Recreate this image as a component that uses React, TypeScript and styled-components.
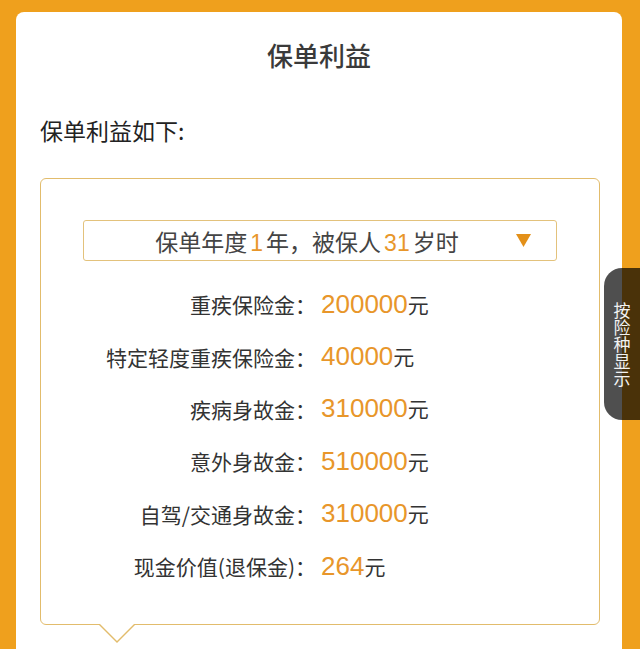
import React from "react";
import styled, { createGlobalStyle } from "styled-components";

const GlobalStyle = createGlobalStyle`
  html, body {
    margin: 0;
    padding: 0;
    background: #EFA01D;
    overflow: hidden;
  }
  body {
    font-family: "Noto Sans CJK SC", "Noto Sans", "Liberation Sans", sans-serif;
    color: #333;
  }
`;

const Page = styled.div`
  position: relative;
  width: 640px;
  height: 649px;
  overflow: hidden;
  padding-top: 12px;
  box-sizing: border-box;
`;

const Card = styled.div`
  margin: 0 18px 0 16px;
  background: #fff;
  border-radius: 8px 8px 0 0;
  padding: 28px 0 60px;
`;

const Title = styled.h1`
  margin: 0;
  font-size: 26px;
  line-height: 30px;
  font-weight: 500;
  text-align: center;
  color: #3a3a3a;
`;

const Subtitle = styled.div`
  margin: 45px 0 0 24px;
  font-size: 23px;
  line-height: 30px;
  color: #222;
`;

const Box = styled.div`
  position: relative;
  margin: 33px 0 0 24px;
  width: 560px;
  box-sizing: border-box;
  border: 1px solid #E2BC6C;
  border-radius: 6px;
  padding: 41px 0 32px;

  &::before,
  &::after {
    content: "";
    position: absolute;
    left: 57px;
    width: 0;
    height: 0;
    border-left: 19px solid transparent;
    border-right: 19px solid transparent;
  }
  &::before {
    bottom: -19px;
    border-top: 19px solid #E2BC6C;
  }
  &::after {
    bottom: -17px;
    left: 58px;
    border-left-width: 18px;
    border-right-width: 18px;
    border-top: 18px solid #fff;
  }
`;

const Select = styled.div`
  margin-left: 42px;
  width: 474px;
  height: 41px;
  box-sizing: border-box;
  border: 1px solid #E3C27C;
  border-radius: 3px;
  display: flex;
  align-items: center;
  padding: 0 25px 0 14px;
`;

const SelectText = styled.div`
  flex: 1;
  text-align: center;
  font-size: 23px;
  color: #444;
  white-space: nowrap;
`;

const Num = styled.span`
  color: #E8962A;
  padding: 0 3px;
  font-family: "Liberation Sans", "Noto Sans", sans-serif;
`;

const Caret = styled.svg`
  width: 15px;
  height: 13px;
  display: block;
`;

const Rows = styled.div`
  margin-top: 17px;
  display: grid;
  grid-template-columns: 275px 1fr;
  grid-auto-rows: 52.4px;
  column-gap: 5px;
  align-items: center;
`;

const Label = styled.div`
  text-align: right;
  font-size: 21px;
  color: #333;
  white-space: nowrap;
`;

const Value = styled.div`
  display: flex;
  align-items: baseline;
  white-space: nowrap;
`;

const Amount = styled.span`
  font-family: "Liberation Sans", "Noto Sans", sans-serif;
  font-size: 26px;
  color: #E8962A;
`;

const Unit = styled.span`
  font-size: 21px;
  color: #333;
`;

const SideTab = styled.div`
  position: absolute;
  right: 0;
  top: 268px;
  width: 36px;
  height: 152px;
  border-radius: 18px 0 0 18px;
  background: rgba(0, 0, 0, 0.69);
  display: flex;
  align-items: center;
  justify-content: center;
`;

const SideText = styled.div`
  writing-mode: vertical-rl;
  font-size: 17px;
  line-height: 17px;
  color: #f2f2f2;
  letter-spacing: 0;
`;

const rows: { label: string; amount: string }[] = [
  { label: "重疾保险金：", amount: "200000" },
  { label: "特定轻度重疾保险金：", amount: "40000" },
  { label: "疾病身故金：", amount: "310000" },
  { label: "意外身故金：", amount: "510000" },
  { label: "自驾/交通身故金：", amount: "310000" },
  { label: "现金价值(退保金)：", amount: "264" },
];

export default function App() {
  return (
    <Page>
      <GlobalStyle />
      <Card>
        <Title>保单利益</Title>
        <Subtitle>保单利益如下:</Subtitle>
        <Box>
          <Select>
            <SelectText>
              保单年度<Num>1</Num>年，被保人<Num>31</Num>岁时
            </SelectText>
            <Caret viewBox="0 0 15 13">
              <path d="M0 0 H15 L7.5 13 Z" fill="#E39019" />
            </Caret>
          </Select>
          <Rows>
            {rows.map((r) => (
              <React.Fragment key={r.label}>
                <Label>{r.label}</Label>
                <Value>
                  <Amount>{r.amount}</Amount>
                  <Unit>元</Unit>
                </Value>
              </React.Fragment>
            ))}
          </Rows>
        </Box>
      </Card>
      <SideTab>
        <SideText>按险种显示</SideText>
      </SideTab>
    </Page>
  );
}
